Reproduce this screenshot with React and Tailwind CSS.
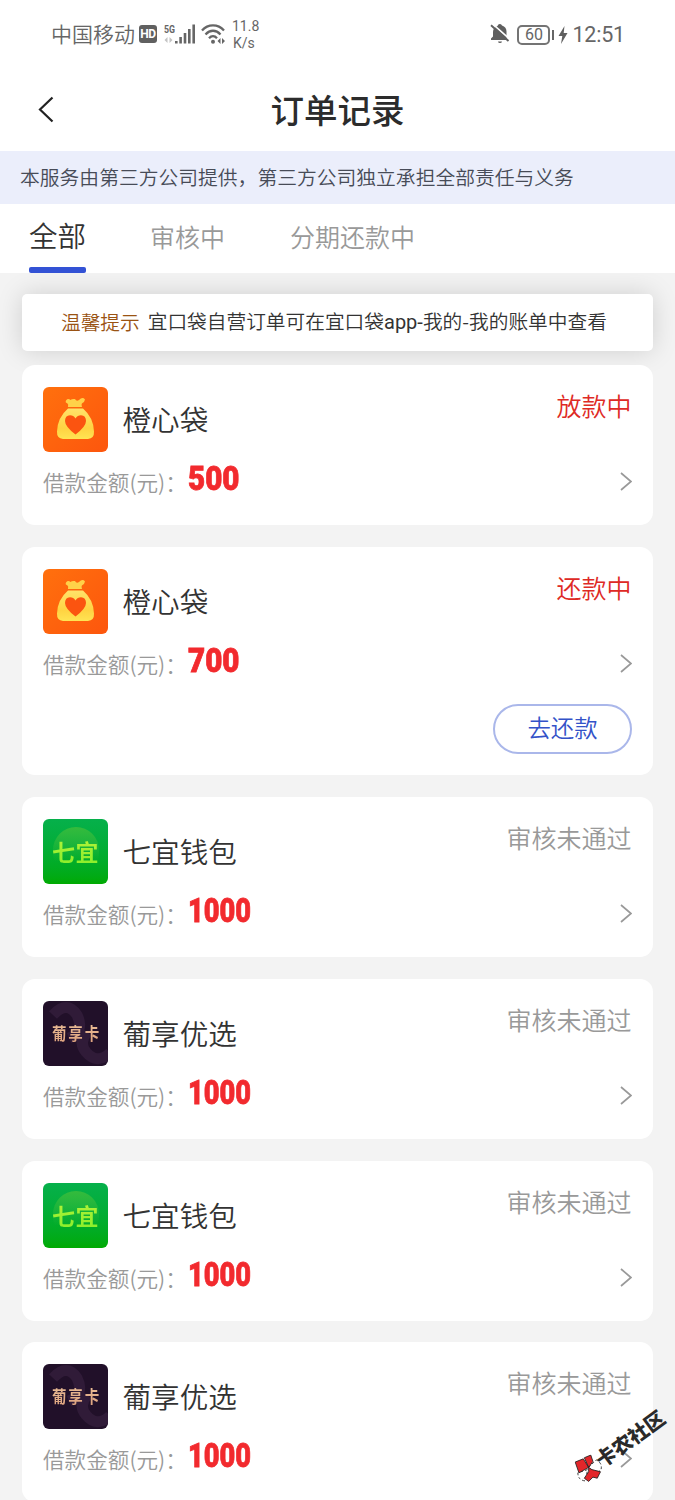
import React from "react";
import clsx from "clsx";

const orders = [
  { id: 1, logo: "orange", name: "橙心袋", amount: "500", status: "放款中", active: true },
  { id: 2, logo: "orange", name: "橙心袋", amount: "700", status: "还款中", active: true, repay: true },
  { id: 3, logo: "green", name: "七宜钱包", amount: "1000", status: "审核未通过" },
  { id: 4, logo: "dark", name: "葡享优选", amount: "1000", status: "审核未通过" },
  { id: 5, logo: "green", name: "七宜钱包", amount: "1000", status: "审核未通过" },
  { id: 6, logo: "dark", name: "葡享优选", amount: "1000", status: "审核未通过" },
];

const StatusBar = () => (
  <div className="flex h-[70px] items-center justify-between pl-[51px] pr-[50px] text-[#666]">
    <div className="flex items-center">
      <span className="pb-[4px] text-[21px] leading-[30px]">中国移动</span>
      <span className="mb-[2px] ml-[4px] flex h-[18px] w-[18px] items-center justify-center rounded-[3px] bg-[#606060] font-[Roboto] text-[12px] font-bold leading-none tracking-[-0.5px] text-white">
        HD
      </span>
      {/* 5G signal */}
      <svg className="ml-[7px] h-[22px] w-[32px]" viewBox="0 0 32 22">
        <text x="0" y="9" fontSize="11" fontWeight="700" fontFamily="Roboto" fill="#666" textLength="11" lengthAdjust="spacingAndGlyphs">
          5G
        </text>
        <path d="M3.500 13 .5 16l3 3zM5.500 13l3 3-3 3z" fill="#c4c4c4" />
        <path d="M11 17h2.600v2.500H11zM15.300 13h2.600v6.500h-2.600zM19.700 9h2.600v10.500h-2.600zM24 5h2.600v14.500H24zM28.400 .5H31v19h-2.600z" fill="#666" />
      </svg>
      <svg className="mb-[2px] ml-[5px] h-[22px] w-[25px]" viewBox="0 0 25 22" fill="none" stroke="#666" strokeWidth="2.300">
        <path d="M1 7.500C7 .7 17 .7 23 7.500M4.500 11.500c4.500-5 10.500-5 15 0M8 15.200c2.500-2.700 5.500-2.700 8 0" />
        <circle cx="12" cy="18.800" r="2" fill="#666" stroke="none" />
        <path d="m19.500 15-3 3 3 3zM21 15l3 3-3 3z" fill="#666" stroke="none" />
      </svg>
      <div className="ml-[6px] flex flex-col font-[Roboto] text-[14px] font-normal leading-[17px]">
        <span>11.8</span>
        <span className="pl-[1px]">K/s</span>
      </div>
    </div>
    <div className="flex items-center font-normal">
      <svg className="mb-[2px] h-[22px] w-[20px]" viewBox="0 0 20 22">
        <path d="M7.500 3 8 2Q8.500 1 10 1t2 1.500q4.500 1.500 4.500 6v6L17.500 17H1v-1.500l2-2V9q0-4.500 4.500-6zM8 18.500h4Q11.800 20 10 20T8 18.500z" fill="#5f5f5f" />
        <path d="M2.500 .8 20 16.300" stroke="#fff" strokeWidth="1.600" />
        <path d="M1 2.300 18.500 18" stroke="#5f5f5f" strokeWidth="1.900" />
      </svg>
      <span className="mb-[1px] ml-[7px] flex h-[20px] w-[33px] items-center justify-center rounded-[5px] border-2 border-[#747474] font-[Roboto] text-[16px] leading-none">
        60
      </span>
      <span className="mb-[1px] ml-[2px] h-[10px] w-[2px] bg-[#666]" />
      <svg className="ml-[4px] h-[18px] w-[10px]" viewBox="0 0 10 18" fill="#5f5f5f">
        <path d="M6.500 0 .5 10h3.800L3 18l6.500-11H5.700z" />
      </svg>
      <span className="ml-[4px] font-[Roboto] text-[21.500px] leading-[30px] tracking-[-0.2px]">12:51</span>
    </div>
  </div>
);

const OrangeLogo = () => (
  <svg className="h-[65px] w-[65px]" viewBox="0 0 65 65">
    <defs>
      <linearGradient id="orangeBg" x1="0" y1="0" x2="1" y2="1">
        <stop offset="0" stopColor="#ff700d" />
        <stop offset="1" stopColor="#fd560d" />
      </linearGradient>
      <linearGradient id="bag" x1="0" y1="0" x2="0" y2="1">
        <stop offset="0" stopColor="#ffe36a" />
        <stop offset=".65" stopColor="#ffd342" />
        <stop offset="1" stopColor="#ffe453" />
      </linearGradient>
    </defs>
    <rect width="65" height="65" rx="6" fill="url(#orangeBg)" />
    <path d="M23 13.500q2-2.500 4.500-.5 1.500-1.500 4.500-1 1.500 3 4 1 3.500-3.500 6-.5-.5 2.500-2.500 3.500-1.500.7-.5 4H25q.8-3-1-4-2-.5-1-2.500z" fill="#ffd149" />
    <path d="M25 21.500h15q10.500 9 11 23 .3 7-6 7.500H20q-6.300-.5-6-7.500 .5-14 11-23z" fill="url(#bag)" />
    <path d="M32.500 47.500Q22 39.500 22 34q0-5.500 5-5.800 3.500 0 5.500 3.300 2-3.300 5.500-3.300 5 .3 5 5.800 0 5.500-10.500 13.500z" fill="#fb5410" />
  </svg>
);

const GreenLogo = () => (
  <div className="flex h-[65px] w-[65px] items-center justify-center rounded-[6px] bg-linear-to-b from-[#06b04b] to-[#00aa00]">
    <div className="flex h-[49px] w-[46px] items-center justify-center rounded-full bg-linear-to-b from-[#35bb3c] to-[#00aa00]/0 to-70%">
      <span className="shrink-0 whitespace-nowrap bg-linear-to-b from-[#b4f23a] to-[#86ee28] bg-clip-text pb-[1px] text-[23px] font-bold leading-[30px] tracking-[0.5px] text-transparent">
        七宜
      </span>
    </div>
  </div>
);

const DarkLogo = () => (
  <div className="relative flex h-[65px] w-[65px] items-center justify-center overflow-hidden rounded-[6px] bg-[#211029]">
    <svg className="absolute inset-0" viewBox="0 0 65 65" fill="none" stroke="#301b38" strokeWidth="11">
      <path d="M10 14q14-15 24 0 8 16-8 23M44 31q-9 11-1 20 11 13 24 1" />
    </svg>
    <span className="relative -mr-[2px] scale-y-[1.15] whitespace-nowrap bg-linear-to-b from-[#edc49b] to-[#d99a78] bg-clip-text pb-[1px] text-[14.500px] font-bold leading-[24px] tracking-[1.800px] text-transparent">
      葡享卡
    </span>
  </div>
);

const logos = { orange: OrangeLogo, green: GreenLogo, dark: DarkLogo };

const Amount = ({ value }) => (
  <span
    className={clsx(
      "mb-[8px] ml-[1px] inline-block origin-left font-[Roboto] text-[34px] font-black leading-[36px] text-[#f22a2e] [-webkit-text-stroke:0.8px_#f22a2e]",
      value.length > 3 ? "scale-x-[0.8]" : "scale-x-[0.87]"
    )}
  >
    {value}
  </span>
);

const OrderCard = ({ order }) => {
  const Logo = logos[order.logo];

  return (
    <div className={clsx("w-full shrink-0 rounded-[13px] bg-white px-[21px] pt-[22px]", order.repay ? "h-[228.500px]" : "h-[160px]")}>
      <div className="flex items-start">
        <Logo />
        <span className="ml-[14.500px] mt-[11px] flex-1 text-[28.600px] leading-[42px] text-[#333]">{order.name}</span>
        <span className={clsx("-mt-[1px] mr-[0.500px] text-[25px] leading-[38px]", order.active ? "text-[#de2a25]" : "text-[#999]")}>
          {order.status}
        </span>
      </div>
      <div className="mt-[11px] flex h-[38px] items-center">
        <span className="text-[21.600px] leading-[32px] text-[#999]">借款金额(元)：</span>
        <Amount value={order.amount} />
        <svg className="ml-auto h-[20px] w-[12px]" viewBox="0 0 12 20" fill="none" stroke="#999" strokeWidth="1.700">
          <path d="m1 1 10 8.500L1 18" />
        </svg>
      </div>
      {order.repay && (
        <div className="mt-[21px] flex justify-end">
          <button className="h-[50px] w-[139px] rounded-full border-2 border-[#aab7ea] pb-[3px] text-[23.400px] leading-[34px] text-[#3352c8]">
            去还款
          </button>
        </div>
      )}
    </div>
  );
};

/* forum stamp in the corner */
const Stamp = () => (
  <div className="absolute left-[567px] top-[1431px] flex w-[108px] origin-center -rotate-[36deg] items-center">
    <svg className="h-[28px] w-[28px] shrink-0 rotate-[36deg]" viewBox="0 0 26 26" stroke="#222" strokeWidth=".8">
      <path d="M13 12 20 5q6 3 4.500 9L20 18zM12 14l-9 3q0 7 7 7.500z" fill="#fff" strokeDasharray="2.500 2" />
      <path d="M.5 7 8 4l5 8-9 5zM9 3l6-2.500 2 6L13 12zM13 12l3 2 8 2-3 6-4-1-4 4-4-3 4-6z" fill="#e3262a" />
    </svg>
    <span className="-ml-[3px] whitespace-nowrap text-[20px] font-black leading-[24px] text-[#2a2a2a]">卡农社区</span>
  </div>
);

export default function App() {
  return (
    <div className="relative flex h-[1500px] w-[675px] flex-col overflow-hidden bg-[#f3f3f3] font-['Noto_Sans_CJK_SC',sans-serif] font-[350]">
      <div className="relative z-10 bg-white">
        <StatusBar />
        <header className="flex h-[81px] items-center px-[37px] pb-[3px]">
          <svg className="h-[28px] w-[18px]" viewBox="0 0 18 28" fill="none" stroke="#222" strokeWidth="2.200">
            <path d="M15.500 2.500 3 14.500l12.500 12" />
          </svg>
          <h1 className="flex-1 pr-[18px] text-center text-[33.500px] font-medium leading-[48px] text-[#2c2c2c]">订单记录</h1>
        </header>
        <div className="flex h-[53px] items-center whitespace-nowrap bg-[#ebeefb] px-[20px] pb-[1px] text-[19.800px] text-[#474b57]">
          本服务由第三方公司提供，第三方公司独立承担全部责任与义务
        </div>
        <nav className="flex h-[69px] items-start pl-[29px] text-[25px] leading-[36px] text-[#999]">
          <div className="flex h-[69px] w-[57px] flex-col justify-between">
            <span className="pt-[10px] text-[28.500px] leading-[42px] text-[#333]">全部</span>
            <span className="h-[6px] rounded-[2px] bg-[#3352d5]" />
          </div>
          <span className="ml-[64px] mt-[14px]">审核中</span>
          <span className="ml-[65px] mt-[14px]">分期还款中</span>
        </nav>
      </div>

      <div className="mx-[22px] mt-[21px] flex h-[57px] shrink-0 items-center whitespace-nowrap rounded-[5px] bg-white pb-[2px] pl-[39px] text-[19.700px] leading-[30px] text-[#333] shadow-[0_0_26px_rgba(0,0,0,0.15)]">
        <span className="mr-[8px] text-[#9a5313]">温馨提示</span>
        <span>
          宜口袋自营订单可在宜口袋<span className="font-[Roboto] text-[20px] font-normal">app-</span>我的-我的账单中查看
        </span>
      </div>

      <div className="mx-[22px] mt-[14px] flex flex-col gap-[21.800px]">
        {orders.map((order) => (
          <OrderCard key={order.id} order={order} />
        ))}
      </div>

      <Stamp />
    </div>
  );
}
